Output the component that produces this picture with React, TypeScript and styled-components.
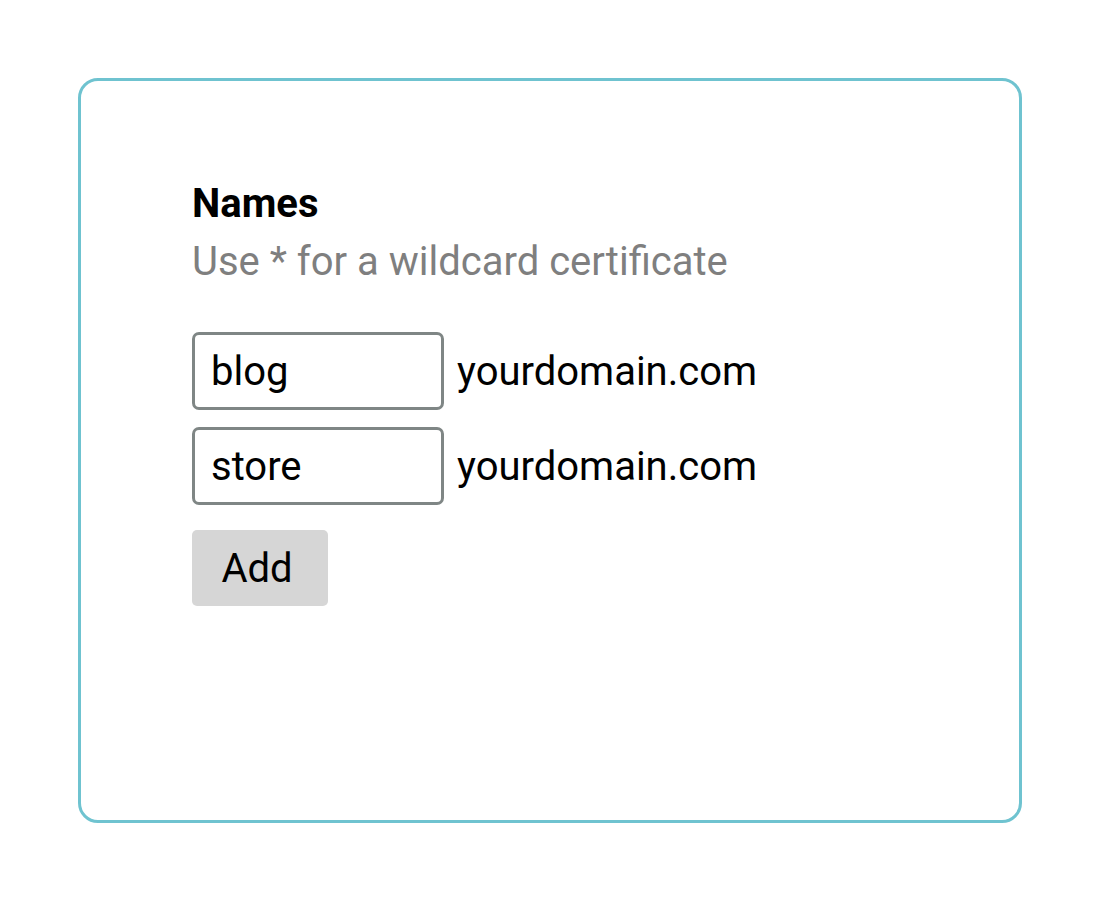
import React from "react";
import styled, { createGlobalStyle } from "styled-components";

const Global = createGlobalStyle`
  html, body { margin: 0; padding: 0; background: #ffffff; }
  body { font-family: Roboto, "Liberation Sans", sans-serif; }
`;

const Page = styled.div`
  padding: 78px 0 0 78px;
`;

const Card = styled.section`
  box-sizing: border-box;
  width: 944px;
  height: 745px;
  border: 3px solid #6fc3d0;
  border-radius: 20px;
  padding: 99px 0 0 111px;
  display: flex;
  flex-direction: column;
`;

const Title = styled.div`
  font-size: 40px;
  line-height: 47px;
  font-weight: 700;
  color: #000000;
`;

const Hint = styled.div`
  margin-top: 11px;
  font-size: 40px;
  line-height: 47px;
  color: #7f7f7f;
`;

const Rows = styled.div`
  margin-top: 47px;
  display: flex;
  flex-direction: column;
  gap: 17px;
`;

const Row = styled.div`
  display: flex;
  align-items: center;
  gap: 13px;
`;

const Field = styled.input`
  box-sizing: border-box;
  width: 252px;
  height: 78px;
  border: 3px solid #7f8685;
  border-radius: 7px;
  padding: 0 0 0 16px;
  font-family: Roboto, "Liberation Sans", sans-serif;
  font-size: 40px;
  color: #000000;
  background: #ffffff;
  outline: none;
`;

const Suffix = styled.span`
  font-size: 40px;
  color: #000000;
`;

const AddButton = styled.button`
  margin-top: 25px;
  align-self: flex-start;
  width: 136px;
  height: 76px;
  border: none;
  border-radius: 5px;
  background: #d6d6d6;
  font-family: Roboto, "Liberation Sans", sans-serif;
  font-size: 40px;
  color: #000000;
  padding: 0 6px 0 0;
`;

export default function App() {
  const names = ["blog", "store"];
  return (
    <>
      <Global />
      <Page>
        <Card>
          <Title>Names</Title>
          <Hint>Use * for a wildcard certificate</Hint>
          <Rows>
            {names.map((n) => (
              <Row key={n}>
                <Field defaultValue={n} />
                <Suffix>yourdomain.com</Suffix>
              </Row>
            ))}
          </Rows>
          <AddButton>Add</AddButton>
        </Card>
      </Page>
    </>
  );
}
